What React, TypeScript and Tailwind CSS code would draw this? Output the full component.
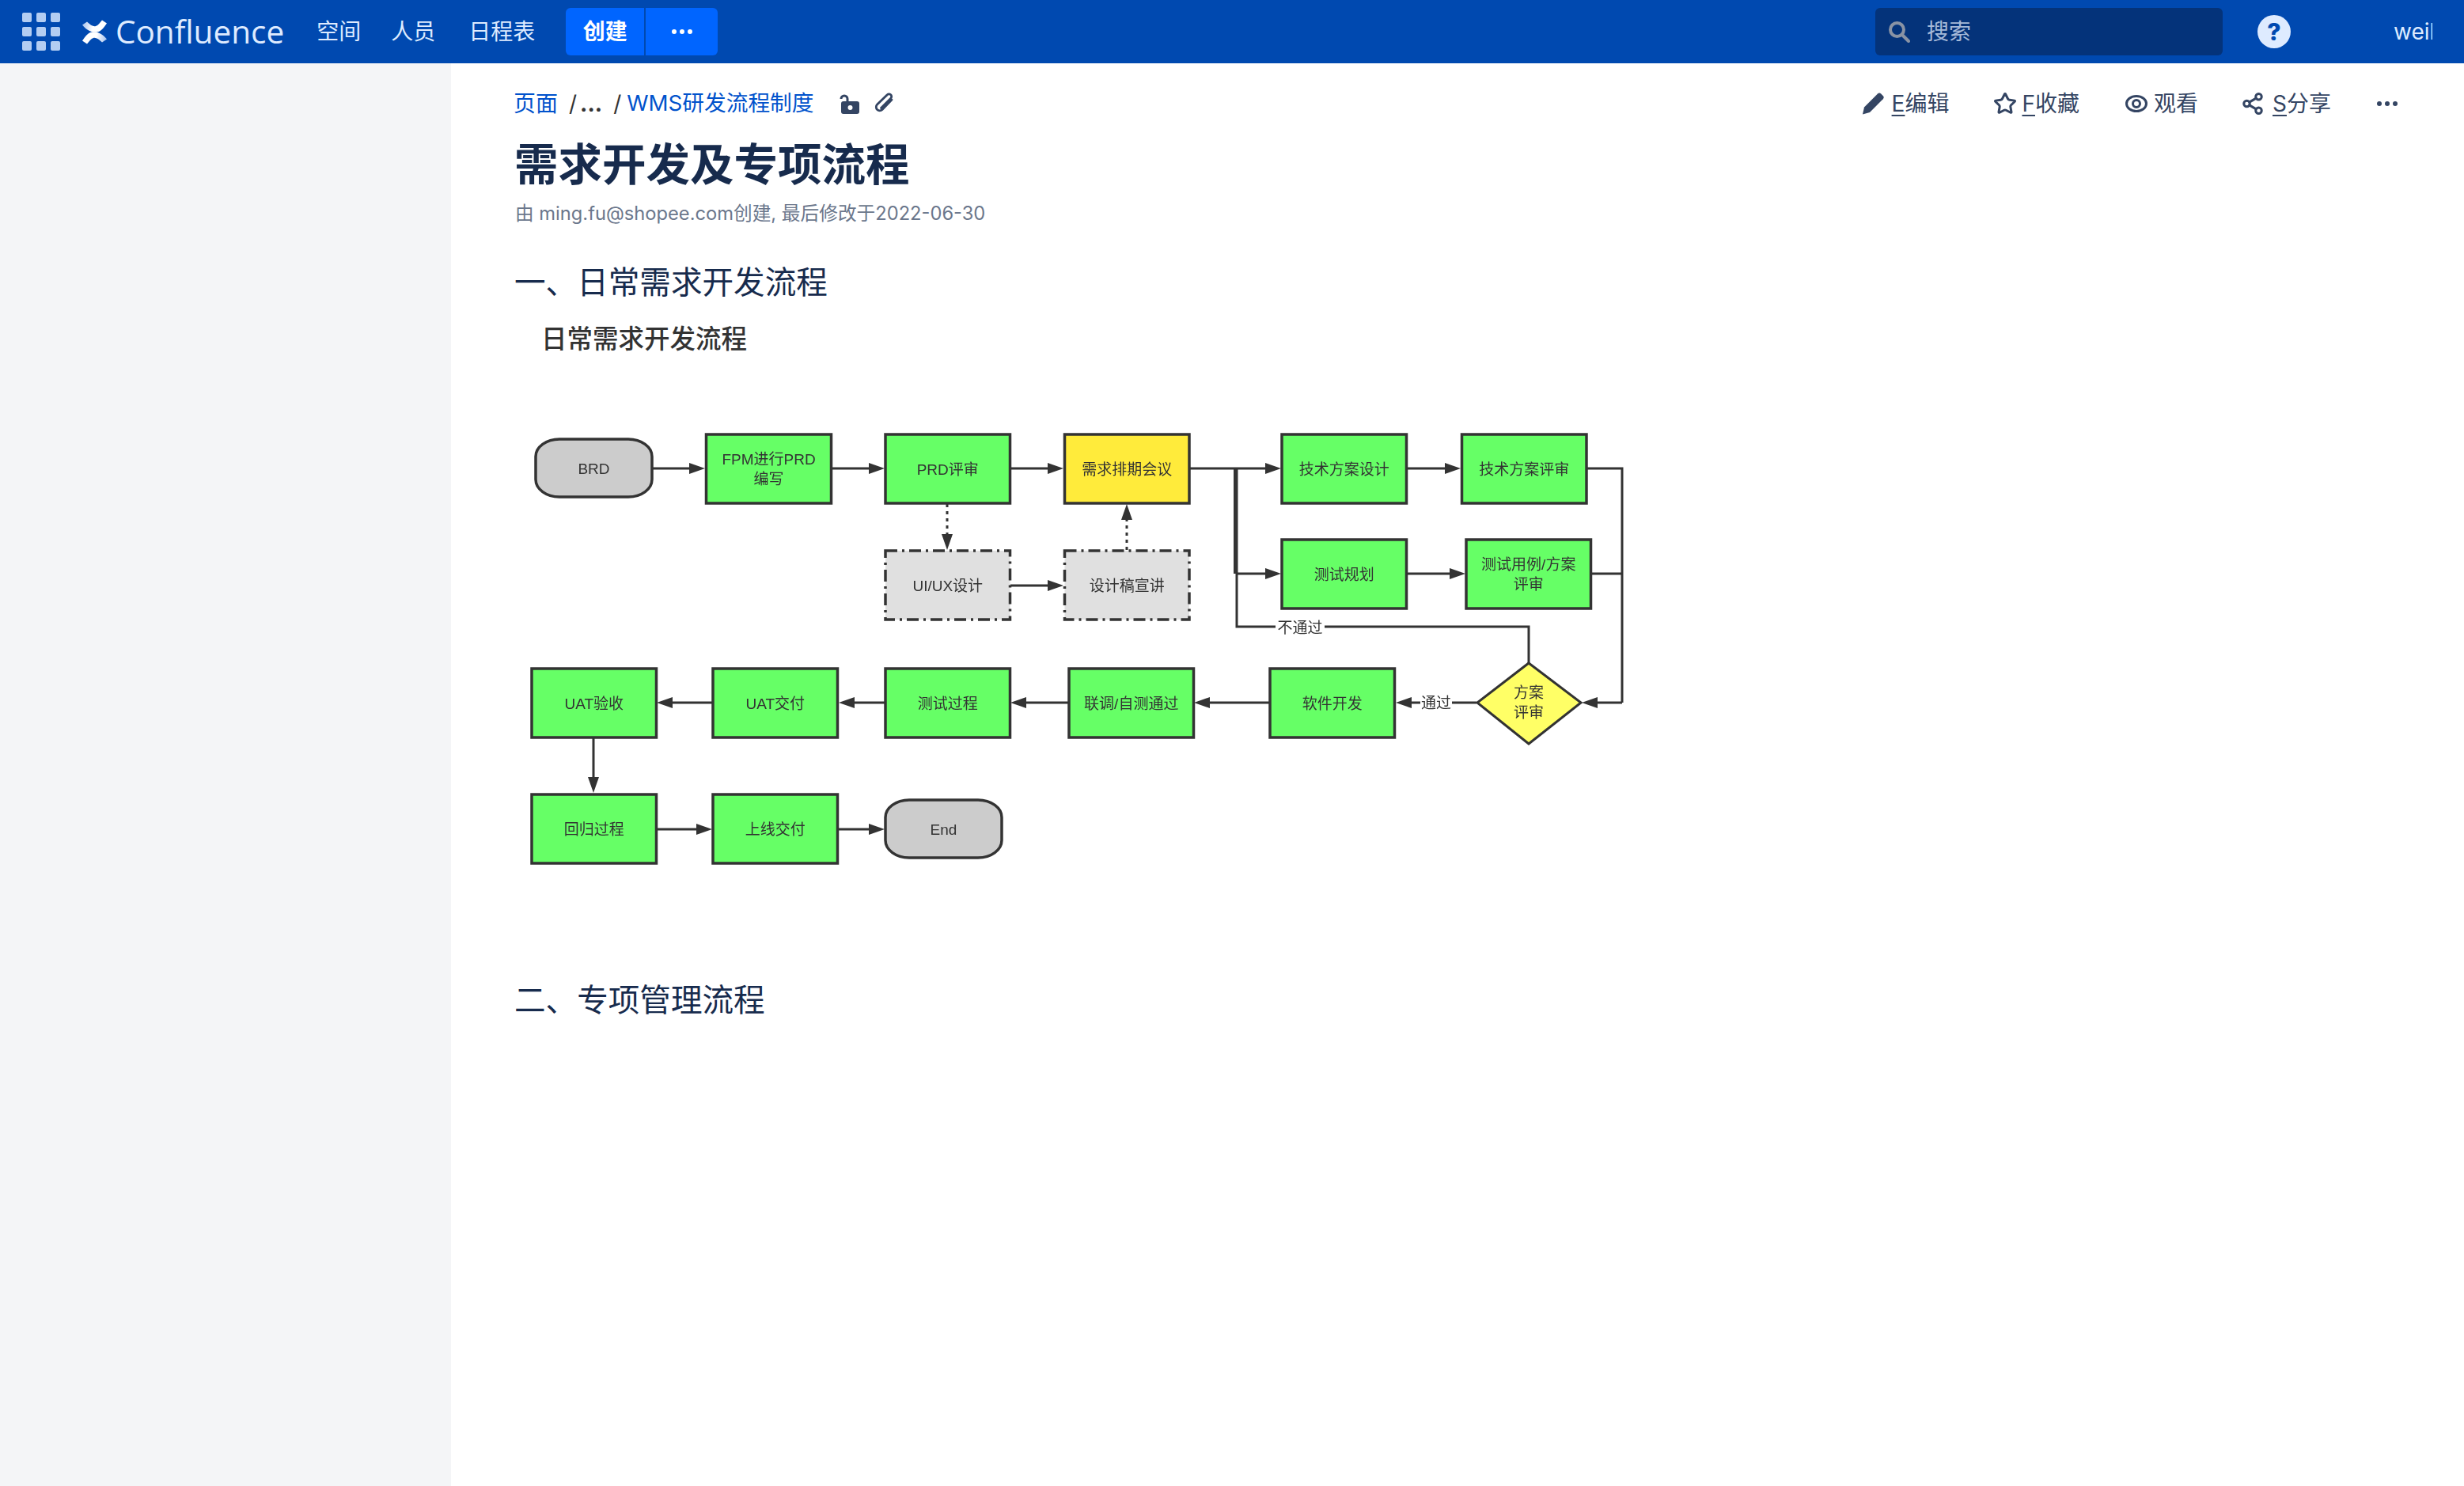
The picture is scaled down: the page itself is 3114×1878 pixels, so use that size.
import { Share2, Star } from "lucide-react";

type Node = {
  x: number;
  y: number;
  w: number;
  h: number;
  lines: string[];
  kind?: "task" | "gate" | "draft" | "end";
};

const H = 87;
const nodes: Node[] = [
  { x: 677, y: 555, w: 147, h: 73, lines: ["BRD"], kind: "end" },
  { x: 892.5, y: 549, w: 158, h: H, lines: ["FPM进行PRD", "编写"] },
  { x: 1119, y: 549, w: 157.5, h: H, lines: ["PRD评审"] },
  { x: 1345.5, y: 549, w: 157.5, h: H, lines: ["需求排期会议"], kind: "gate" },
  { x: 1620, y: 549, w: 157.5, h: H, lines: ["技术方案设计"] },
  { x: 1847.5, y: 549, w: 157.5, h: H, lines: ["技术方案评审"] },
  { x: 1620, y: 682, w: 157.5, h: H, lines: ["测试规划"] },
  { x: 1853, y: 682, w: 157.5, h: H, lines: ["测试用例/方案", "评审"] },
  { x: 1119, y: 696, w: 157.5, h: H, lines: ["UI/UX设计"], kind: "draft" },
  { x: 1345.5, y: 696, w: 157.5, h: H, lines: ["设计稿宣讲"], kind: "draft" },
  { x: 672, y: 845, w: 157.5, h: H, lines: ["UAT验收"] },
  { x: 901, y: 845, w: 157.5, h: H, lines: ["UAT交付"] },
  { x: 1119, y: 845, w: 157.5, h: H, lines: ["测试过程"] },
  { x: 1351, y: 845, w: 157.5, h: H, lines: ["联调/自测通过"] },
  { x: 1605, y: 845, w: 157.5, h: H, lines: ["软件开发"] },
  { x: 672, y: 1004, w: 157.5, h: H, lines: ["回归过程"] },
  { x: 901, y: 1004, w: 157.5, h: H, lines: ["上线交付"] },
  { x: 1119, y: 1011, w: 147, h: 73, lines: ["End"], kind: "end" },
];

// x1, y1 -> x2, y2, arrow head on the second point
const arrows: [number, number, number, number][] = [
  [825, 592, 891, 592],
  [1051, 592, 1118, 592],
  [1277, 592, 1344, 592],
  [1504, 592, 1619, 592],
  [1779, 592, 1846, 592],
  [1562, 725, 1619, 725],
  [1779, 725, 1852, 725],
  [1277, 740, 1344, 740],
  [2050, 888, 1999, 888],
  [1604, 888, 1509, 888],
  [1350, 888, 1277, 888],
  [1118, 888, 1060, 888],
  [900, 888, 830, 888],
  [750, 933, 750, 1002],
  [830, 1048, 900, 1048],
  [1060, 1048, 1118, 1048],
  [1866, 888, 1764, 888],
];

const Arrow = ({ a, dotted }: { a: [number, number, number, number]; dotted?: boolean }) => {
  const [x1, y1, x2, y2] = a;
  const dx = Math.sign(x2 - x1);
  const dy = Math.sign(y2 - y1);
  const bx = x2 - dx * 20;
  const by = y2 - dy * 20;
  return (
    <g>
      <line x1={x1} y1={y1} x2={bx} y2={by} stroke="#333" strokeWidth={3} strokeDasharray={dotted ? "4 5" : undefined} />
      <polygon
        fill="#333"
        points={`${x2},${y2} ${bx + dy * 7},${by + dx * 7} ${bx - dy * 7},${by - dx * 7}`}
      />
    </g>
  );
};

const Flowchart = () => (
  <svg
    viewBox="651 500 1420 620"
    className="mt-[51px] block h-[620px] w-[1420px] font-['Liberation_Sans','Noto_Sans_CJK_SC',sans-serif] blur-[0.5px]"
  >
    {nodes.map((n) => (
      <g key={n.lines[0]}>
        <rect
          x={n.x}
          y={n.y}
          width={n.w}
          height={n.h}
          rx={n.kind === "end" ? 30 : 0}
          ry={n.kind === "end" ? 22 : 0}
          fill={
            n.kind === "end" ? "#cccccc" : n.kind === "gate" ? "#ffeb3b" : n.kind === "draft" ? "#e0e0e0" : "#66ff66"
          }
          stroke="#333"
          strokeWidth={3.5}
          strokeDasharray={n.kind === "draft" ? "15 6 3 6" : undefined}
        />
        {n.lines.map((t, i) => (
          <text
            key={t}
            x={n.x + n.w / 2}
            y={n.y + n.h / 2 + 7 + (i - (n.lines.length - 1) / 2) * 25}
            textAnchor="middle"
            fontSize={19}
            fill="#333"
          >
            {t}
          </text>
        ))}
      </g>
    ))}

    <polygon points="1932,838 1998,888 1932,940 1867,888" fill="#ffff66" stroke="#333" strokeWidth={3} />
    <text x={1932} y={882} textAnchor="middle" fontSize={19} fill="#333">方案</text>
    <text x={1932} y={907} textAnchor="middle" fontSize={19} fill="#333">评审</text>

    <polyline points="1563,592 1563,792 1932,792 1932,838" fill="none" stroke="#333" strokeWidth={3} />
    <line x1={1560.5} y1={592} x2={1560.5} y2={725} stroke="#333" strokeWidth={3} />
    <polyline points="2006,592 2050,592 2050,888" fill="none" stroke="#333" strokeWidth={3} />
    <line x1={2012} y1={725} x2={2050} y2={725} stroke="#333" strokeWidth={3} />

    {arrows.map((a) => (
      <Arrow key={a.join()} a={a} />
    ))}
    <Arrow a={[1197, 637, 1197, 695]} dotted />
    <Arrow a={[1424, 695, 1424, 637]} dotted />

    <rect x={1612} y={780} width={62} height={26} fill="#fff" />
    <text x={1643} y={800} textAnchor="middle" fontSize={19} fill="#333">不通过</text>
    <rect x={1795} y={875} width={40} height={26} fill="#fff" />
    <text x={1815} y={895} textAnchor="middle" fontSize={19} fill="#333">通过</text>
  </svg>
);

const GridIcon = () => (
  <svg viewBox="0 0 48 48" className="h-12 w-12" fill="#b3cdf2">
    {[0, 18, 36].flatMap((y) =>
      [0, 18, 36].map((x) => <rect key={`${x}-${y}`} x={x} y={y} width="12" height="12" rx="2" />),
    )}
  </svg>
);

const SWOOSH = "M0 6.5 L6 2.5 C10 6.5 14 9 17 8 C20 7 22 4 25 0.5 L31 4.5 C27 10 24 14.5 19 15.5 C13 16.5 6 14 0 6.5Z";

const ConfluenceMark = () => (
  <svg viewBox="0 0 31 31" className="h-[31px] w-[31px]">
    <defs>
      <linearGradient id="swoosh" x1="0" y1="8" x2="22" y2="12" gradientUnits="userSpaceOnUse">
        <stop offset="0" stopColor="#a9c4ee" />
        <stop offset="0.6" stopColor="#ffffff" />
      </linearGradient>
    </defs>
    <path d={SWOOSH} fill="url(#swoosh)" />
    <path d={SWOOSH} fill="url(#swoosh)" transform="rotate(180 15.5 15.5)" />
  </svg>
);

const NavLink = ({ children, className }: { children: string; className: string }) => (
  <span className={`text-[28px] text-[#deebff] ${className}`}>{children}</span>
);

const Topbar = () => (
  <header className="flex h-20 items-center bg-[#0049b0] pl-7">
    <GridIcon />
    <div className="ml-7">
      <ConfluenceMark />
    </div>
    <span className="ml-[11px] font-['Open_Sans',sans-serif] text-[40.5px] leading-none text-[#deebff]">
      Confluence
    </span>
    <NavLink className="ml-[41px]">空间</NavLink>
    <NavLink className="ml-[38px]">人员</NavLink>
    <NavLink className="ml-[42px]">日程表</NavLink>
    <div className="ml-[39px] flex h-[60px] w-[192px] overflow-hidden rounded-md bg-[#0065ff] text-white">
      <div className="flex w-[101px] items-center justify-center border-r-2 border-[#0049b0] text-[28px] font-bold">
        创建
      </div>
      <div className="flex flex-1 items-center justify-center">
        <svg viewBox="0 0 28 8" className="h-2 w-7" fill="#fff">
          <circle cx="4" cy="4" r="3" />
          <circle cx="14" cy="4" r="3" />
          <circle cx="24" cy="4" r="3" />
        </svg>
      </div>
    </div>

    <div className="ml-auto flex h-[60px] w-[439px] items-center rounded-md bg-[#04337a] pl-4 text-[28px] text-[#a5b9d8]">
      <svg viewBox="0 0 28 28" className="h-7 w-7" fill="none" stroke="#8993a4" strokeWidth="4">
        <circle cx="11.5" cy="11.5" r="8.5" />
        <path d="M18 18l8 8" strokeLinecap="round" />
      </svg>
      <span className="ml-[21px]">搜索</span>
    </div>
    <div className="ml-11 flex h-[42px] w-[42px] items-center justify-center rounded-full bg-[#deebff] text-[30px] leading-none font-extrabold text-[#0049b0]">
      ?
    </div>
    <div className="mr-10 ml-[130px] w-[49px] overflow-hidden font-['Inter',sans-serif] text-[28px] text-[#deebff]">weil</div>
  </header>
);

const Shortcut = ({ k, label }: { k: string; label: string }) => (
  <span>
    <span className="underline underline-offset-4">{k}</span>
    {label}
  </span>
);

const Actions = () => (
  <div className="ml-auto flex items-center pr-[83px] text-[28px] text-[#344563]">
    <svg viewBox="0 0 28 28" className="h-7 w-7" fill="#344563">
      <path d="M20 1.5 a3 3 0 0 1 4.2 0 l2.5 2.5 a3 3 0 0 1 0 4.2 L10 25 l-9 2.5 L3 18.5z" />
    </svg>
    <span className="ml-[10px]">
      <Shortcut k="E" label="编辑" />
    </span>
    <Star className="ml-[56px] h-[30px] w-[30px]" strokeWidth={2.4} />
    <span className="ml-[6px]">
      <Shortcut k="F" label="收藏" />
    </span>
    <svg viewBox="0 0 28 28" className="ml-[58px] h-7 w-7" fill="none" stroke="#344563" strokeWidth="3">
      <ellipse cx="14" cy="14" rx="12.5" ry="9.5" />
      <circle cx="14" cy="14" r="4.5" />
    </svg>
    <span className="ml-[8px]">观看</span>
    <Share2 className="ml-[54px] h-[30px] w-[30px]" strokeWidth={2.4} />
    <span className="ml-[10px]">
      <Shortcut k="S" label="分享" />
    </span>
    <svg viewBox="0 0 28 8" className="ml-[57px] h-2 w-7" fill="#344563">
      <circle cx="4" cy="4" r="3" />
      <circle cx="14" cy="4" r="3" />
      <circle cx="24" cy="4" r="3" />
    </svg>
  </div>
);

const Breadcrumbs = () => (
  <div className="-ml-0.5 flex items-center text-[28px] text-[#333]">
    <span className="text-[#0052cc]">页面</span>
    <span className="ml-[14px]">/</span>
    <span className="ml-[4px] font-bold">...</span>
    <span className="ml-[14px]">/</span>
    <span className="ml-[7px] text-[27.7px] text-[#0052cc]">WMS研发流程制度</span>
    <svg viewBox="0 0 28 28" className="ml-[31px] h-7 w-7" fill="#344563">
      <path d="M8 11V7a4 4 0 0 0-8 0" fill="none" stroke="#344563" strokeWidth="3" transform="translate(4 1)" />
      <path fillRule="evenodd" d="M7 11h17a3 3 0 0 1 3 3v10a3 3 0 0 1-3 3H7a3 3 0 0 1-3-3V14a3 3 0 0 1 3-3zM15.5 16a3 3 0 1 0 0 6 3 3 0 0 0 0-6z" />
    </svg>
    <svg viewBox="0 0 28 28" className="ml-[16px] h-[28px] w-[28px]" fill="none" stroke="#344563" strokeWidth="2.8" strokeLinecap="round">
      <path d="M24 9L12 21.5a4.5 4.5 0 0 1-6.4-6.4L18 3a3 3 0 0 1 5 4L10.5 19.5" />
    </svg>
  </div>
);

export default function App() {
  return (
    <div className="flex min-h-screen flex-col bg-white font-['Inter','Noto_Sans_CJK_SC',sans-serif]">
      <Topbar />
      <div className="flex flex-1">
        <aside className="w-[570px] shrink-0 bg-[#f4f5f7]" />
        <main className="flex-1 pl-[81px]">
          <div className="mt-8 flex h-[38px] items-center">
            <Breadcrumbs />
            <Actions />
          </div>
          <h1 className="mt-[26px] -ml-px text-[55.5px] leading-[64px] font-bold text-[#172b4d]">需求开发及专项流程</h1>
          <p className="mt-[12px] text-[23.7px] leading-9 text-[#6b778c]">由 ming.fu@shopee.com创建, 最后修改于2022-06-30</p>
          <h2 className="mt-[45px] -ml-px text-[39.6px] leading-[48px] text-[#172b4d]">一、日常需求开发流程</h2>
          <h3 className="mt-7 -ml-px pl-[34px] text-[32.5px] leading-10 font-medium text-[#333]">日常需求开发流程</h3>
          <Flowchart />
          <h2 className="mt-[120px] -ml-px text-[39.6px] leading-[48px] text-[#172b4d]">二、专项管理流程</h2>
        </main>
      </div>
    </div>
  );
}
